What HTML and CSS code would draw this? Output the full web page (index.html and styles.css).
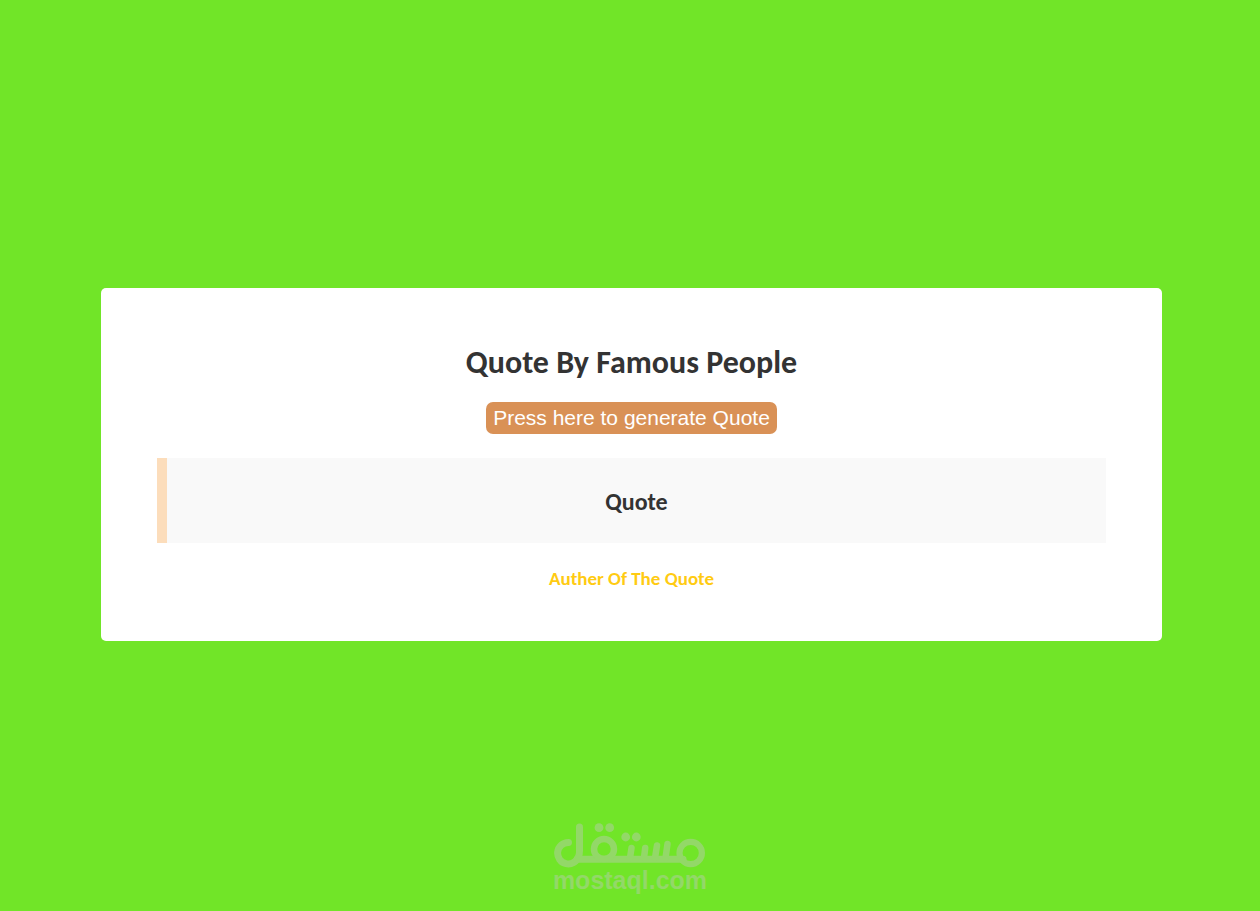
FILE: index.html
```html
<!DOCTYPE html>
<html lang="en">
<head>
  <meta charset="utf-8">
  <meta name="viewport" content="width=device-width, initial-scale=1">
  <title>Quote By Famous People</title>
  <link rel="stylesheet" href="styles.css">
</head>
<body>
  <main class="card">
    <h1 class="title">Quote By Famous People</h1>
    <button class="generate" type="button">Press here to generate Quote</button>
    <blockquote class="quote">Quote</blockquote>
    <p class="author">Auther Of The Quote</p>
  </main>
  <footer class="watermark">
    <svg class="watermark-logo" viewBox="0 0 152 46" role="img" aria-label="مستقل">
      <g fill="none" stroke="currentColor" stroke-width="7" stroke-linecap="round">
        <path d="M14.500 19.500A10.700 10.700 0 1 0 24.500 33.500Q25.500 32 25.500 28V4"/>
        <path d="M23 36.300H129"/>
        <circle cx="50" cy="26" r="10" stroke-width="6.500"/>
        <circle cx="136.700" cy="30" r="11.200" stroke-width="6.200"/>
        <path d="M76 35L77.500 25M90 35L91.200 25M101 35L103 22.500M111.500 35L113.500 21" stroke-width="6.500"/>
      </g>
      <g fill="currentColor">
        <circle cx="45" cy="4.700" r="4.400"/>
        <circle cx="55.700" cy="4.700" r="4.400"/>
        <circle cx="71.700" cy="14" r="4.400"/>
        <circle cx="82.300" cy="14" r="4.400"/>
      </g>
    </svg>
    <span class="watermark-text">mostaql.com</span>
  </footer>
</body>
</html>
```
FILE: styles.css
```css
* {
  box-sizing: border-box;
}

body {
  margin: 0;
  min-height: 100vh;
  padding: 18px 98px 0 101px;
  display: flex;
  align-items: center;
  background: #71e528;
  color: #333;
  font-family: Calibri, Carlito, Lato, sans-serif;
}

.card {
  flex: 1;
  padding: 54px 56px 50px;
  display: flex;
  flex-direction: column;
  align-items: center;
  background: #fff;
  border-radius: 5px;
  text-align: center;
}

.title {
  margin: 0 0 18px;
  font-size: 32px;
  line-height: 42px;
  font-weight: 700;
}

.generate {
  margin: 0 0 24px;
  padding: 0 7px;
  border: 0;
  border-radius: 7px;
  background: #d99156;
  color: #fff;
  font: 21px/32px "Liberation Sans", Arial, sans-serif;
  cursor: pointer;
}

.quote {
  align-self: stretch;
  margin: 0 0 24px;
  padding: 29px 20px 27px;
  border-left: 10px solid #fcddbb;
  background: #f9f9f9;
  font-size: 24px;
  line-height: 29px;
  font-weight: 700;
}

.author {
  margin: 0;
  color: #ffcb12;
  font-size: 19px;
  line-height: 24px;
  font-weight: 700;
}

.watermark {
  position: absolute;
  left: 0;
  right: 0;
  bottom: 19px;
  display: flex;
  flex-direction: column;
  align-items: center;
  color: #93d868;
  pointer-events: none;
}

.watermark-logo {
  width: 152px;
  height: 46px;
}

.watermark-text {
  font: 700 25px/23px "Liberation Sans", Arial, sans-serif;
}
```
